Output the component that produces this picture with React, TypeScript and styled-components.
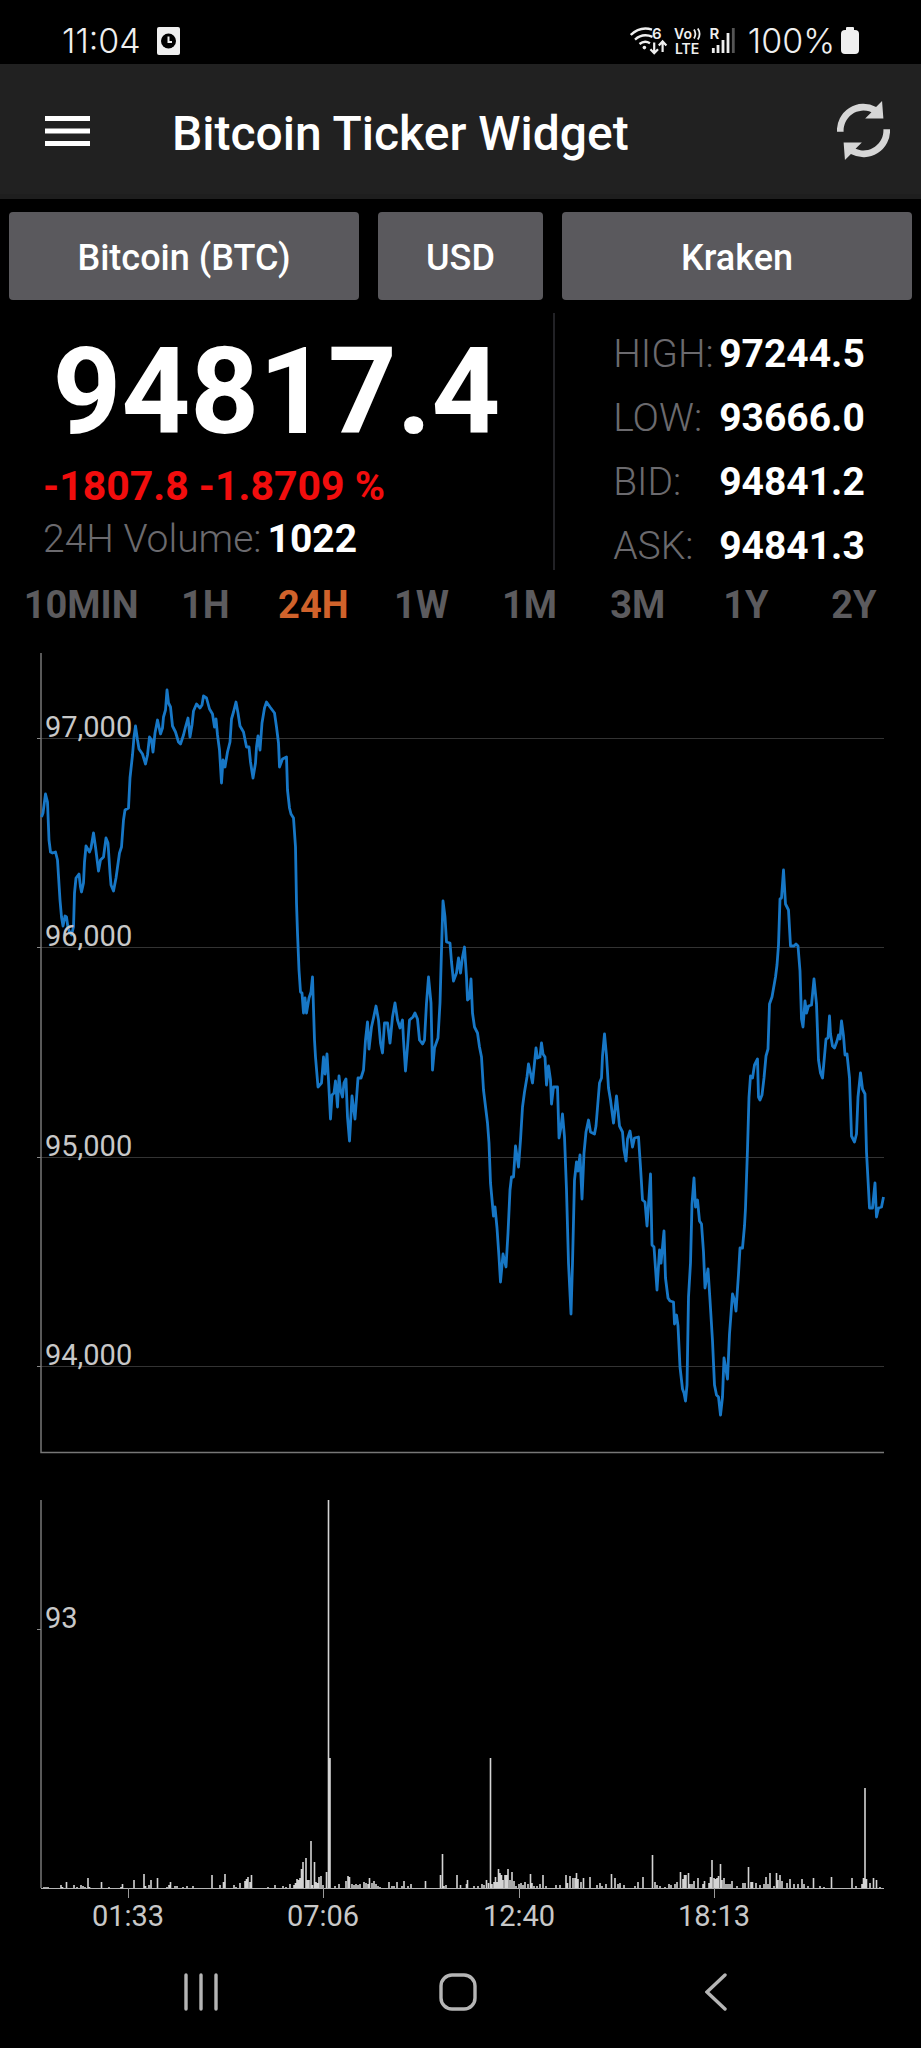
import React, { useState } from "react";
import styled, { createGlobalStyle } from "styled-components";

const GlobalStyle = createGlobalStyle`
  *, *::before, *::after { box-sizing: border-box; }
  body { margin: 0; background: #000; color: #fff; font-family: Roboto, sans-serif; }
  button { margin: 0; padding: 0; border: 0; background: none; color: inherit; font-family: inherit; cursor: pointer; }
  svg { display: block; }
`;

const Screen = styled.div`
  display: flex;
  flex-direction: column;
  min-height: 100vh;
  background: #000;
`;

const StatusBar = styled.div`
  display: flex;
  align-items: center;
  height: 64px;
  padding: 17px 62px 0 62px;
  color: #efefef;
  font-family: Inter, sans-serif;
  font-weight: 300;
  font-size: 34px;
  line-height: 46px;
`;

const StatusGroup = styled.div<{ $end?: boolean; $gap: number }>`
  display: flex;
  align-items: center;
  gap: ${(p) => p.$gap}px;
  margin-left: ${(p) => (p.$end ? "auto" : "0")};
`;

const AppBar = styled.header`
  display: flex;
  align-items: center;
  height: 135px;
  padding: 3px 31px 0 45px;
  background: #212121;
  border-bottom: 5px solid #1e1e1e;
`;

const IconButton = styled.button`
  display: flex;
  align-items: center;
  justify-content: center;
`;

const Title = styled.h1`
  flex: 1;
  margin: 0;
  padding: 6px 0 0 82px;
  font-size: 48px;
  line-height: 56px;
  font-weight: 500;
`;

const Filters = styled.div`
  display: grid;
  grid-template-columns: 350fr 165fr 350fr;
  gap: 19px;
  padding: 13px 9px;
`;

const FilterButton = styled.button`
  height: 88px;
  padding-top: 4px;
  border-radius: 4px;
  background: #5a595d;
  color: #fff;
  font-size: 36px;
  line-height: 40px;
  font-weight: 500;
`;

const Quote = styled.section`
  display: grid;
  grid-template-columns: 555fr 366fr;
  height: 264px;
`;

const QuoteMain = styled.div`
  position: relative;
  display: flex;
  flex-direction: column;
  padding: 18px 0 0;

  &::after {
    content: "";
    position: absolute;
    top: 0;
    right: 0;
    width: 2px;
    height: 257px;
    background: #222226;
  }
`;

const Price = styled.div`
  padding-right: 2px;
  font-size: 120px;
  line-height: 122px;
  font-weight: 700;
  text-align: center;
`;

const Change = styled.div`
  margin-top: 9px;
  padding-left: 43px;
  color: #f20d0d;
  font-size: 41px;
  line-height: 48px;
  font-weight: 700;
`;

const Volume = styled.div`
  display: flex;
  gap: 6px;
  margin-top: 5px;
  padding-left: 43px;
  color: #6b6a6e;
  font-size: 39px;
  line-height: 48px;
  font-weight: 300;
`;

const Strong = styled.strong`
  color: #fff;
  font-weight: 700;
`;

const Stats = styled.dl`
  display: grid;
  grid-template-columns: 106px auto;
  justify-content: center;
  grid-auto-rows: 64px;
  align-items: center;
  margin: 0;
  padding: 9px 0 0 2px;
  font-size: 39px;
  line-height: 48px;
`;

const StatLabel = styled.dt`
  color: #6b6a6e;
  font-weight: 300;
`;

const StatValue = styled.dd`
  margin: 0;
  font-weight: 700;
`;

const Ranges = styled.nav`
  display: grid;
  grid-template-columns: 140fr repeat(7, 108fr);
  height: 54px;
  margin-bottom: 9px;
  padding: 2px 13px 0 11px;
`;

const RangeButton = styled.button<{ $active: boolean }>`
  color: ${(p) => (p.$active ? "#d0622b" : "#5c5b5e")};
  font-size: 38px;
  line-height: 48px;
  font-weight: 700;
`;

const Chart = styled.svg`
  width: 100%;
  height: auto;
`;

const AxisText = styled.text`
  fill: #c8c8c8;
  font-family: Roboto, sans-serif;
  font-size: 29px;
`;

const NavBar = styled.nav`
  display: grid;
  grid-template-columns: repeat(3, 1fr);
  height: 108px;
  padding: 0 76px 4px 72px;
`;

const PRICE_LINE =
  "41.5,177 43,173 45.5,154 47.5,162 49,200 50.5,212 52.5,213 55.5,212 57.5,220 60,260 61.5,277 63,286 65,276 66.5,277 68,288 70,293 71.5,295 73.5,287 74.5,253 76,238 79,234 80.5,247 81.5,252 83.5,243 84.5,222 86,206 89.5,212 91,208 93.5,193 95.5,207 98.5,231 100.5,220 103.5,217 106,198 108,203 110,233 111,245 113.5,251 116,238 119.5,213 121.5,207 123.5,180 125,170 128.5,168 130,138 132.5,115 134,97 135.5,86 137.5,100 139,109 142.5,114 145.5,124 147.5,115 149.5,97 151.5,100 153,112 155,93 157.5,80 160.5,94 162.5,88 163.5,77 165.5,70 167,50 168.5,63 170.5,67 172.5,86 175.5,92 178.5,102 180.5,104 183.5,95 185.5,87 188,78 190,97 192,85 193.5,71 196.5,64 200,68 202,65 203.5,56 206.5,58 209.5,69 212.5,74 214.5,87 216,79 217.5,95 219.5,110 221.5,143 223,120 225,127 227.5,112 230,102 231.5,79 233.5,72 236,62 238,73 240,86 243.5,92 246.5,107 249,107 250.5,122 253,138 255.5,123 256.5,107 258,96 260,110 262,83 264.5,68 266.5,62 270,67 274.5,73 276.5,87 278.5,103 279.5,127 282.5,119 286.5,117 287.5,150 289.5,168 291,174 293.5,178 295.5,207 296.5,263 297.5,293 299,330 300.5,352 302,353 303.5,373 305,358 306.5,373 309,358 311,352 312.5,337 314.5,400 315.5,417 318,447 321.5,443 323.5,417 325,434 327,414 " +
  "328.5,440 330.5,479 332,455 334,453 335.5,441 337.5,467 339,436 340.5,450 342.5,457 344,443 346,439 347.5,477 349.5,501 352,456 355,479 358,438 361,438 363.5,430 365.5,400 367.5,382 369,409 371.5,387 373.5,378 376,366 378.5,380 380.5,403 382.5,413 384.5,383 387.5,383 390,403 392.5,377 395,363 397.5,380 400,388 402.5,380 403.5,400 405.5,431 407.5,407 409.5,380 413,377 415,373 417.5,379 419.5,400 422.5,404 424.5,400 426.5,363 428.5,337 431,363 432.5,430 434.5,408 438,398 440,363 441.5,310 443,261 445,277 446.5,302 450,303 451.5,322 453.5,341 456.5,333 458.5,318 460.5,333 462.5,317 464.5,307 466.5,337 467.5,360 469.5,358 471,339 472.5,373 474.5,387 477.5,393 479.5,407 481.5,417 483.5,450 487.5,483 489,503 490.5,543 493.5,576 495,567 497,588 499,617 500.5,642 503,614 506,627 508,593 510,550 511.5,537 513.5,537 515.5,506 518.5,527 520.5,500 522.5,467 524.5,452 527,437 528.5,424 530.5,433 532.5,443 534.5,423 536,408 537.5,418 540,417 541.5,403 543,414 545,417 546.5,445 548.5,426 550.5,440 551.5,464 553.5,447 557.5,447 559,498 561,487 562.5,474 564.5,497 566.5,550 568.5,623 571,674 572.5,623 574.5,540 576.5,522 578,531 580,515 582,559 584,513 586,492 " +
  "588.5,480 590.5,492 594.5,494 596,486 599.5,443 601.5,438 602.5,416 604.5,394 606.5,416 608.5,448 610.5,460 613.5,483 616.5,456 619.5,486 622.5,492 624,510 626,521 627.5,499 630,491 632.5,507 634.5,498 638.5,497 640.5,527 642.5,560 645,562 647,586 649,557 650.5,534 652,605 654,607 657,650 659.5,610 661,623 664,591 665.5,638 668,658 670,661 673.5,662 674.5,684 676.5,675 678,686 680,727 682.5,749 684,753 685.5,761 687,745 688.5,657 690.5,623 692,564 694,538 695.5,567 697.5,560 699.5,581 701.5,584 703.5,612 705,648 708,629 710,660 712.5,701 714.5,745 716.5,755 718.5,757 720.5,775 722.5,757 724,718 725.5,727 727.5,739 729.5,694 732.5,654 734.5,660 736,671 738.5,634 740,608 742.5,608 744.5,586 745.5,568 747.5,509 749,457 750.5,436 752.5,438 754.5,425 757.5,419 758.5,457 760,460 762,455 764,438 766,416 768,409 769.5,364 772,357 775.5,337 777,325 778.5,305 780,259 781.5,258 783.5,230 785.5,264 788.5,270 790.5,306 794,306 796,304 798,306 800,331 801.5,379 803,387 805,361 806.5,373 808.5,366 811.5,365 814,339 816.5,364 818.5,420 820.5,433 822.5,438 824.5,416 826,399 828,398 829.5,376 830.5,394 832.5,406 834.5,408 837,401 838.5,395 840,399 841.5,381 843.5,396 845,415 847,414 849.5,438 851.5,496 854.5,502 856.5,494 858,457 860.5,433 862.5,449 865,454 866.5,512 868.5,549 869.5,568 872.5,568 875,543 876.5,577 878.5,568 881.5,567 883.5,557";

/* Pairs of horizontal position and bar height. */
const VOLUME_BARS: [number, number][] = [
  [44, 1], [46, 1], [48, 1], [61, 3], [62.5, 1], [66.5, 6], [74, 3], [77, 1], [81, 3], [83, 2], [85, 1], [88, 10], [89.5, 1],
  [101.5, 6], [109, 1], [121, 1], [122.5, 4], [134, 8], [144, 14], [145.5, 2], [149, 3], [151, 8], [157.5, 10], [167, 1],
  [169, 3], [170.5, 6], [175, 2], [177, 2], [183, 1], [187, 2], [193, 2], [212, 13], [220, 3], [223.5, 6], [225, 14],
  [234, 3], [236, 1], [240, 5], [245, 7], [246.5, 9], [248, 11], [250, 6], [251.5, 13], [268, 1], [275, 3], [283, 2],
  [286, 1], [290, 4], [294, 3], [295.5, 5], [297, 9], [298.5, 8], [300, 10], [301.5, 19], [303, 26], [306, 30],
  [307.5, 8], [309, 8], [311, 47], [312.5, 3], [314.5, 26], [316, 6], [317.5, 5], [319, 11], [321, 12], [323, 3],
  [326.5, 16], [328.5, 388], [330, 130], [335, 2], [339, 4], [346, 7], [348, 12], [349.5, 11], [352, 4], [354, 3],
  [356, 4], [358, 3], [360, 4], [364, 6], [366, 5], [368, 4], [369.5, 10], [372, 5], [374, 7], [376, 4], [378, 2],
  [380, 1], [389, 6], [392, 2], [394, 2], [397, 6], [402, 2], [404, 7], [408, 2], [411, 4], [425.5, 7], [440.5, 13],
  [442.5, 34], [444, 2], [446, 3], [457, 13], [460.5, 3], [466.5, 4], [467.5, 8], [474, 2], [478, 2], [482, 4], [484, 3],
  [486.5, 8], [488.5, 5], [490.5, 130], [492, 4], [494, 6], [495.5, 11], [497, 6], [498.5, 19], [500, 15], [501.5, 13],
  [503, 8], [505, 13], [506.5, 13], [508, 19], [510, 8], [512, 16], [514, 7], [516, 2], [519, 4], [521, 5], [523, 3],
  [525, 6], [528, 4], [530.5, 14], [532, 5], [534, 2], [537, 2], [540, 4], [543, 13], [546, 2], [556, 3], [560, 3],
  [566, 13], [567.5, 5], [570, 12], [573, 10], [575, 10], [576.5, 15], [578, 9], [581, 6], [583.5, 10], [590, 11],
  [597, 3], [600, 5], [602, 2], [606, 4], [611.5, 14], [615, 10], [618, 4], [620, 5], [624, 3], [635, 2], [638, 6],
  [643, 11], [652.5, 33], [655, 6], [657, 3], [660, 2], [665, 1], [669, 4], [671, 3], [675, 4], [677, 6], [680.5, 16],
  [683, 9], [684.5, 13], [686, 13], [688.5, 15], [690, 4], [692, 4], [694, 7], [698, 10], [703, 4], [704.5, 7], [709, 5],
  [710.5, 11], [712, 28], [714, 10], [715.5, 9], [717, 10], [718.5, 12], [720.5, 24], [722, 8], [724, 10], [726, 4],
  [728, 4], [730, 4], [732, 7], [737, 2], [743, 5], [745, 5], [748.5, 21], [751, 6], [752.5, 6], [756, 5], [760, 3],
  [764, 4], [766, 11], [768, 4], [770, 15], [774, 2], [776.5, 15], [778, 8], [780, 13], [782, 7], [787, 5], [790, 9],
  [794, 4], [798, 4], [802, 9], [804, 4], [808, 2], [813.5, 10], [820, 2], [824, 1], [831.5, 11], [852, 10], [856, 2],
  [862, 4], [863.5, 10], [865, 100], [866.5, 9], [870, 5], [873.5, 10], [876.5, 8], [880, 1],
];

const GRID = [
  { y: 98, label: "97,000" },
  { y: 307, label: "96,000" },
  { y: 517, label: "95,000" },
  { y: 726, label: "94,000" },
];

const TIMES = [
  { x: 128, label: "01:33" },
  { x: 323, label: "07:06" },
  { x: 519, label: "12:40" },
  { x: 714, label: "18:13" },
];

const RANGES = ["10MIN", "1H", "24H", "1W", "1M", "3M", "1Y", "2Y"];

const STATS = [
  ["HIGH:", "97244.5"],
  ["LOW:", "93666.0"],
  ["BID:", "94841.2"],
  ["ASK:", "94841.3"],
];

const ClockBadge = () => (
  <svg width="23" height="28" viewBox="0 0 23 28" aria-hidden="true">
    <rect width="23" height="28" rx="2" fill="#efefef" />
    <circle cx="11.5" cy="14" r="7.5" fill="#000" />
    <path d="M11.5 9.5V15H15" fill="none" stroke="#efefef" strokeWidth="2" />
  </svg>
);

const ConnectionIcons = () => (
  <svg width="106" height="41" viewBox="0 -6 106 41" fill="none" stroke="#efefef" strokeWidth="2.4" aria-hidden="true">
    <path d="M.8 9Q10 0 22 3.6M5 13.6Q12.5 6.8 22.5 10.8M9.5 18Q14.5 14 20 17.2" />
    <circle cx="14.4" cy="21.6" r="1.8" fill="#efefef" stroke="none" />
    <path d="M24.2 16.5V27M20.4 23.2l3.8 4 3.8-4M32.6 26V16M28.8 19.4l3.8-4 3.8 4" strokeWidth="2.2" />
    <path d="M64 3.5q2.8 4.5 0 9M67.8 2.5q3.6 5.5 0 11" strokeWidth="1.8" />
    <g fill="#efefef" stroke="none" fontFamily="Inter, sans-serif" fontWeight="600">
      <text x="22" y="13" fontSize="15">6</text>
      <text x="44" y="13" fontSize="14">Vo</text>
      <text x="45" y="28" fontSize="14">LTE</text>
      <text x="79.5" y="13" fontSize="15">R</text>
    </g>
    <path d="M83.3 27v-5M88 27v-8M93 27V14M98 27V7" strokeWidth="2.8" />
    <path d="M103.3 27V2" stroke="#555" strokeWidth="2.8" />
  </svg>
);

const Battery = () => (
  <svg width="18" height="27" viewBox="0 0 18 27" aria-hidden="true">
    <rect x="5" width="8" height="6" rx="1" fill="#efefef" />
    <rect y="3" width="18" height="24" rx="4" fill="#efefef" />
  </svg>
);

const MenuIcon = () => (
  <svg width="45" height="30" viewBox="0 0 45 30" fill="#fff" aria-hidden="true">
    <rect width="45" height="5" />
    <rect y="12.5" width="45" height="5" />
    <rect y="25" width="45" height="5" />
  </svg>
);

const RefreshIcon = () => (
  <svg width="53" height="59" viewBox="0 0 160 178" fill="#d6d6d6" aria-hidden="true">
    <path id="arrow" d="M0 93A80 80 0 0 1 118 18L136 0L140 53H85L104 34A60 60 0 0 0 20 93Z" />
    <use href="#arrow" transform="rotate(180 80 89)" />
  </svg>
);

export default function App() {
  const [range, setRange] = useState("24H");

  return (
    <Screen>
      <GlobalStyle />
      <StatusBar>
        <StatusGroup $gap={16}>
          <span>11:04</span>
          <ClockBadge />
        </StatusGroup>
        <StatusGroup $end $gap={12}>
          <ConnectionIcons />
          <StatusGroup $gap={6}>
            <span>100%</span>
            <Battery />
          </StatusGroup>
        </StatusGroup>
      </StatusBar>

      <AppBar>
        <IconButton aria-label="Menu">
          <MenuIcon />
        </IconButton>
        <Title>Bitcoin Ticker Widget</Title>
        <IconButton aria-label="Refresh">
          <RefreshIcon />
        </IconButton>
      </AppBar>

      <Filters>
        <FilterButton>Bitcoin (BTC)</FilterButton>
        <FilterButton>USD</FilterButton>
        <FilterButton>Kraken</FilterButton>
      </Filters>

      <Quote>
        <QuoteMain>
          <Price>94817.4</Price>
          <Change>-1807.8 -1.8709 %</Change>
          <Volume>
            <span>24H Volume:</span>
            <Strong>1022</Strong>
          </Volume>
        </QuoteMain>
        <Stats>
          {STATS.map(([label, value]) => (
            <React.Fragment key={label}>
              <StatLabel>{label}</StatLabel>
              <StatValue>{value}</StatValue>
            </React.Fragment>
          ))}
        </Stats>
      </Quote>

      <Ranges aria-label="Time range">
        {RANGES.map((r) => (
          <RangeButton key={r} $active={r === range} aria-pressed={r === range} onClick={() => setRange(r)}>
            {r}
          </RangeButton>
        ))}
      </Ranges>

      <Chart viewBox="0 0 921 840" role="img" aria-label="Price history">
        {GRID.map((g) => (
          <g key={g.label}>
            <path d={`M41 ${g.y + 0.5}H884`} stroke="#333" strokeWidth="1" />
            <path d={`M37 ${g.y + 0.5}H41`} stroke="#888" strokeWidth="1" />
          </g>
        ))}
        <path d="M41 13V812.5H884" fill="none" stroke="#777" strokeWidth="1.5" />
        <polyline points={PRICE_LINE} fill="none" stroke="#1777c6" strokeWidth="2.8" strokeLinejoin="round" />
        {GRID.map((g) => (
          <AxisText key={g.label} x="45" y={g.y - 1}>
            {g.label}
          </AxisText>
        ))}
      </Chart>

      <Chart viewBox="0 0 921 460" role="img" aria-label="Volume history">
        <path d="M41 20V408" stroke="#777" strokeWidth="1.5" />
        <path d="M37 149.5H41" stroke="#888" />
        <path d="M41 408.5H884" stroke="#b4b4b4" strokeWidth="1.2" />
        <path d={VOLUME_BARS.map(([x, h]) => `M${x} 408v-${h}`).join("")} stroke="#d4d4d4" strokeWidth="1.6" />
        <AxisText x="45" y="148">93</AxisText>
        {TIMES.map((t) => (
          <g key={t.label}>
            <path d={`M${t.x + 0.5} 408V418`} stroke="#999" />
            <AxisText x={t.x} y="446" textAnchor="middle">
              {t.label}
            </AxisText>
          </g>
        ))}
      </Chart>

      <NavBar aria-label="System">
        <IconButton aria-label="Recent apps">
          <svg width="34" height="38" viewBox="0 0 34 38" stroke="#b5b5b5" strokeWidth="3.4" strokeLinecap="round">
            <path d="M2 2V36M17 2V36M32 2V36" />
          </svg>
        </IconButton>
        <IconButton aria-label="Home">
          <svg width="38" height="38" viewBox="0 0 38 38" fill="none" stroke="#b5b5b5" strokeWidth="3.4">
            <rect x="2" y="2" width="34" height="34" rx="11" />
          </svg>
        </IconButton>
        <IconButton aria-label="Back">
          <svg width="22" height="38" viewBox="0 0 22 38" fill="none" stroke="#b5b5b5" strokeWidth="3.4" strokeLinecap="round">
            <path d="M20 2L2 19L20 36" />
          </svg>
        </IconButton>
      </NavBar>
    </Screen>
  );
}
